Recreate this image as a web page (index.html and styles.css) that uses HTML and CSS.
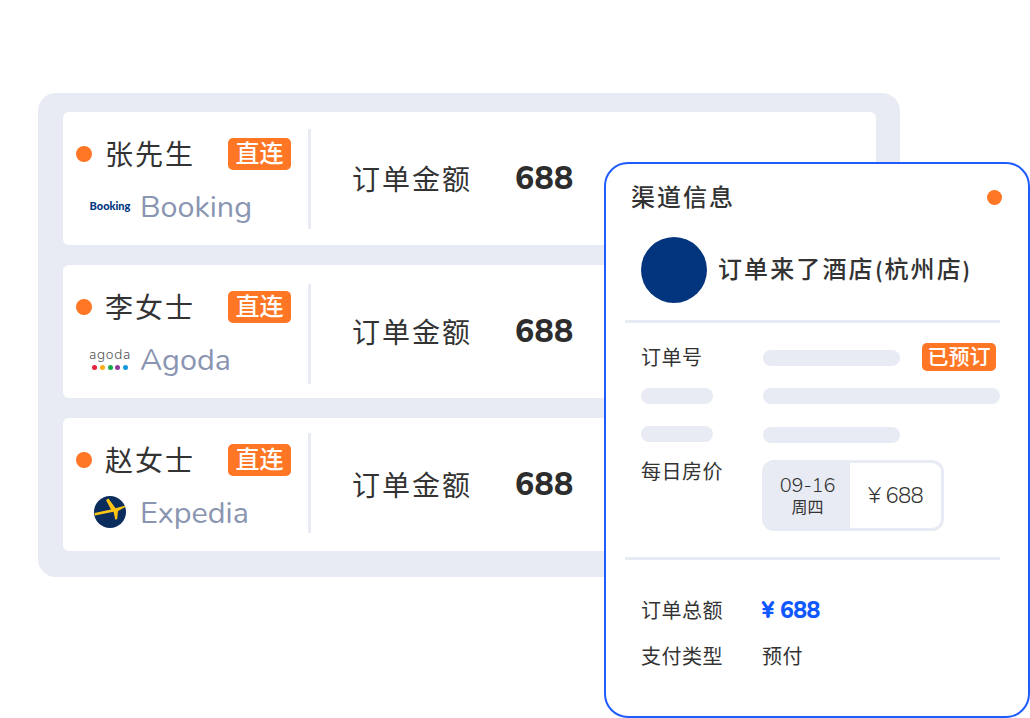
FILE: index.html
```html
<!DOCTYPE html>
<html lang="zh-CN">
<head>
<meta charset="utf-8">
<title>渠道信息</title>
<link rel="stylesheet" href="styles.css">
</head>
<body>
<main class="stage">
  <section class="panel">
    <article class="order order-one">
      <div class="guest">
        <div class="guest-top"><span class="dot"></span><span class="name">张先生</span><span class="tag">直连</span></div>
        <div class="channel"><span class="logo"><span class="booking">Booking</span></span><span class="channel-name">Booking</span></div>
      </div>
      <div class="divider"></div>
      <div class="amount"><span class="amount-label">订单金额</span><span class="amount-value">688</span></div>
    </article>
    <article class="order order-two">
      <div class="guest">
        <div class="guest-top"><span class="dot"></span><span class="name">李女士</span><span class="tag">直连</span></div>
        <div class="channel"><span class="logo agoda"><span class="agoda-word">agoda</span><span class="agoda-dots"><i class="c1"></i><i class="c2"></i><i class="c3"></i><i class="c4"></i><i class="c5"></i></span></span><span class="channel-name">Agoda</span></div>
      </div>
      <div class="divider"></div>
      <div class="amount"><span class="amount-label">订单金额</span><span class="amount-value">688</span></div>
    </article>
    <article class="order order-three">
      <div class="guest">
        <div class="guest-top"><span class="dot"></span><span class="name">赵女士</span><span class="tag">直连</span></div>
        <div class="channel"><span class="logo"><svg class="expedia" viewBox="0 0 32 32" width="32" height="32"><circle cx="16" cy="16" r="16" fill="#0b2d5e"/><path d="M0.5 17 L17 13.5 L12 4 L14.5 2.5 L21.5 12.3 L30.5 9.8 L31.3 11 L24 15 L23.2 23 L21.3 23.8 L19.5 15.8 L1 19.5 Z" fill="#fdc513"/></svg></span><span class="channel-name">Expedia</span></div>
      </div>
      <div class="divider"></div>
      <div class="amount"><span class="amount-label">订单金额</span><span class="amount-value">688</span></div>
    </article>
  </section>

  <aside class="card">
    <header class="card-head"><h2 class="card-title">渠道信息</h2><span class="dot dot-small"></span></header>
    <div class="hotel"><span class="avatar"></span><span class="hotel-name">订单来了酒店(杭州店)</span></div>
    <div class="rule"></div>
    <div class="rows">
      <div class="row row-first"><span class="label">订单号</span><span class="bar bar-mid"></span><span class="tag tag-small">已预订</span></div>
      <div class="row row-second"><span class="bar bar-label"></span><span class="bar bar-long"></span></div>
      <div class="row row-third"><span class="bar bar-label"></span><span class="bar bar-mid bar-nudge"></span></div>
      <div class="row row-price"><span class="label">每日房价</span>
        <div class="price-box">
          <div class="price-date"><span class="date">09-16</span><span class="week">周四</span></div>
          <div class="price-value">¥ 688</div>
        </div>
      </div>
    </div>
    <div class="rule rule-lower"></div>
    <div class="row row-total"><span class="label">订单总额</span><span class="total">¥ 688</span></div>
    <div class="row row-pay"><span class="label">支付类型</span><span class="label">预付</span></div>
  </aside>
</main>
</body>
</html>
```
FILE: styles.css
```css
* { box-sizing: border-box; }
html, body { margin: 0; height: 100%; background: #fff; }
body {
  font-family: "Nunito", "Lato", "Noto Sans CJK SC", sans-serif;
  color: #333;
  overflow: hidden;
}
.stage { position: relative; width: 1030px; height: 718px; padding: 93px 0 0 38px; }

.panel {
  width: 862px; height: 484px; padding: 19px 24px 26px 25px;
  background: #e8ebf4; border-radius: 18px;
  display: flex; flex-direction: column; gap: 20px;
}
.order {
  height: 133px; background: #fff; border-radius: 6px;
  display: flex; align-items: flex-start; padding-left: 13px;
}
.guest {
  width: 232px; height: 100px; margin-top: 17px;
  display: flex; flex-direction: column;
}
.divider { width: 3px; height: 100px; background: #e8ebf4; flex: none; margin-top: 17px; }
.order-two .divider { margin-top: 19px; }
.order-three .divider { margin-top: 15px; }
.guest-top { display: flex; align-items: center; height: 50px; }
.dot { width: 16px; height: 16px; border-radius: 50%; background: #ff7625; flex: none; }
.name { margin-left: 13px; width: 123px; font-size: 28px; letter-spacing: 2px; line-height: 50px; position: relative; top: 2px; }
.tag {
  width: 63px; height: 32px; background: #ff7625; color: #fff; border-radius: 5px;
  font-size: 24px; font-weight: 500; line-height: 32px; text-align: center; flex: none;
}
.channel { display: flex; align-items: center; height: 50px; margin-top: 2px; }
.logo { width: 64px; display: flex; flex-direction: column; align-items: center; padding-left: 4px; flex: none; }
.booking { font-family: "Lato", sans-serif; font-size: 11px; font-weight: 900; color: #003580; line-height: 14px; }
.agoda-word { font-size: 14px; line-height: 14px; letter-spacing: 0.7px; color: #555; font-weight: 300; }
.agoda-dots { display: flex; gap: 2.6px; margin-top: 3px; }
.agoda-dots i { width: 5px; height: 5px; border-radius: 50%; }
.c1 { background: #e8213d; } .c2 { background: #fcad17; } .c3 { background: #14a94b; } .c4 { background: #8e3a97; } .c5 { background: #1299dd; }
.channel-name { font-size: 30.5px; color: #8a95b2; line-height: 50px; position: relative; top: 1px; }
.amount { display: flex; align-items: center; height: 133px; margin-left: 41px; }
.amount-label { font-size: 28px; letter-spacing: 2px; width: 163px; }
.amount-value { font-size: 32px; font-weight: 800; color: #2d2d2d; letter-spacing: 0.3px; }

.card {
  position: absolute; left: 604px; top: 162px; width: 426px; height: 556px;
  background: #fff; border: 2px solid #1f5cff; border-radius: 24px;
  padding: 0 28px 0 19px;
}
.card-head { display: flex; justify-content: space-between; align-items: center; height: 68px; padding: 0 0 5px 6px; }
.card-title { margin: 0; font-size: 24px; font-weight: 500; letter-spacing: 2px; }
.dot-small { width: 15px; height: 15px; margin-right: -2px; position: relative; top: 2px; }
.hotel { display: flex; align-items: center; gap: 11px; height: 66px; margin-top: 5px; padding-left: 16px; }
.avatar { width: 66px; height: 66px; border-radius: 50%; background: #03357f; flex: none; }
.hotel-name { font-size: 24px; font-weight: 500; letter-spacing: 2.1px; white-space: nowrap; position: relative; top: -2px; }
.rule { height: 3px; background: #e8ebf4; margin-top: 17px; }
.rule-lower { margin-top: 26px; }
.rows { padding-left: 16px; }
.row { display: flex; align-items: center; padding-left: 16px; }
.rows .row { padding-left: 0; }
.label { font-size: 20px; letter-spacing: 0.5px; white-space: nowrap; }
.row .label:first-child { width: 121px; flex: none; }
.bar { height: 16px; border-radius: 8px; background: #e8ebf4; flex: none; }
.row-first .bar { margin-left: 1px; position: relative; top: 1px; }
.bar-mid { width: 137px; }
.bar-long { width: 237px; }
.bar-label { width: 72px; margin-right: 50px; }
.bar-nudge { position: relative; top: 1px; }
.row-first { height: 28px; margin-top: 20px; }
.tag-small { width: 74px; height: 28px; line-height: 28px; font-size: 21px; margin-left: 22px; }
.row-second { margin-top: 17px; }
.row-third { margin-top: 22px; }
.row-price { align-items: flex-start; margin-top: 18px; }
.row-price .label { line-height: 24px; position: relative; top: 1px; }
.price-box {
  width: 182px; height: 71px; border: 3px solid #e8ebf4; border-radius: 12px;
  display: flex; overflow: hidden;
}
.price-date {
  width: 85px; background: #e8ebf4; display: flex; flex-direction: column; align-items: center; justify-content: center;
}
.date { font-size: 20px; line-height: 25px; letter-spacing: -0.2px; font-weight: 300; }
.week { font-size: 16px; line-height: 21px; }
.price-value { flex: 1; display: flex; align-items: center; justify-content: center; font-size: 22px; font-weight: 300; letter-spacing: -0.7px; }
.row-total { margin-top: 35px; height: 30px; }
.total { font-size: 23px; font-weight: 800; color: #0f57ff; margin-left: -1px; letter-spacing: -0.6px; }
.row-pay { margin-top: 16px; height: 30px; }
```
